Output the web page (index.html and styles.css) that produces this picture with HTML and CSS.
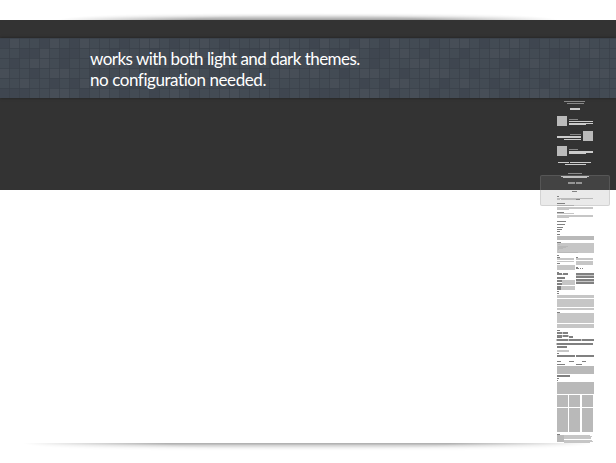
FILE: index.html
```html
<!DOCTYPE html>
<html lang="en">
<head>
<meta charset="utf-8">
<title>Themes</title>
<link rel="stylesheet" href="styles.css">
</head>
<body>
<div class="shade shade-top"></div>
<main class="stage">
  <section class="dark">
    <div class="banner">
      <svg class="tiles" width="616" height="60" aria-hidden="true">
        <defs>
          <pattern id="grid" width="10" height="10" patternUnits="userSpaceOnUse">
            <path d="M9.5 0V10M0 .5H10" stroke="#394049" stroke-opacity=".75"/>
          </pattern>
          <pattern id="tone" width="310" height="60" patternUnits="userSpaceOnUse">
            <path fill="#3f4650" d="M0 0h10v10h-10zM40 0h10v10h-10zM70 0h10v10h-10zM120 0h10v10h-10zM170 0h10v10h-10zM220 0h10v10h-10zM20 10h20v10h-20zM60 10h20v10h-20zM110 10h10v10h-10zM150 10h10v10h-10zM240 10h20v10h-20zM10 20h10v10h-10zM60 20h10v10h-10zM140 20h10v10h-10zM190 20h20v10h-20zM270 20h10v10h-10zM30 30h10v10h-10zM90 30h10v10h-10zM160 30h10v10h-10zM210 30h10v10h-10zM260 30h10v10h-10zM50 40h10v10h-10zM70 40h10v10h-10zM130 40h10v10h-10zM180 40h10v10h-10zM230 40h10v10h-10zM0 50h30v10h-30zM80 50h10v10h-10zM120 50h10v10h-10zM150 50h10v10h-10zM190 50h10v10h-10zM280 50h10v10h-10z"/>
            <path fill="#474e57" d="M10 0h10v10h-10zM50 0h10v10h-10zM80 0h10v10h-10zM140 0h20v10h-20zM200 0h10v10h-10zM260 0h20v10h-20zM40 10h10v10h-10zM90 10h10v10h-10zM180 10h20v10h-20zM280 10h10v10h-10zM30 20h20v10h-20zM100 20h20v10h-20zM220 20h10v10h-10zM0 30h10v10h-10zM50 30h20v10h-20zM120 30h20v10h-20zM190 30h10v10h-10zM280 30h20v10h-20zM20 40h10v10h-10zM80 40h20v10h-20zM150 40h10v10h-10zM250 40h10v10h-10zM50 50h20v10h-20zM100 50h10v10h-10zM170 50h10v10h-10zM220 50h20v10h-20z"/>
          </pattern>
        </defs>
        <rect width="616" height="60" fill="#434b54"/>
        <rect width="616" height="60" fill="url(#tone)"/>
        <rect width="616" height="60" fill="url(#grid)"/>
      </svg>
      <p class="tagline"><span class="line-one">works with both light and dark themes.</span><br><span class="line-two">no configuration needed.</span></p>
    </div>
  </section>
  <section class="light"></section>
</main>
<div class="shade shade-bottom"></div>

<aside class="minimap">
  <svg width="76" height="363" viewBox="540 95 76 363" shape-rendering="crispEdges" aria-hidden="true">
    <path fill="#888" d="M564 101h21v1h-21zM567 103h17v1h-17zM569 119h9v1h-9zM570 134h11v1h-11zM569 149h9v1h-9zM568 173h14v1h-14z"/>
    <path fill="#cbcbcb" d="M570 108h10v2h-10zM569 121h24v1h-24zM569 123h24v1h-24zM569 124h17v1h-17zM557 136h24v2h-24zM564 139h17v1h-17zM569 151h24v2h-24zM569 153h17v1h-17zM558 162h11v1h-11zM570 162h21v1h-21zM565 164h21v1h-21zM561 176h28v1h-28zM563 177h24v1h-24z"/>
    <path fill="#bababa" d="M557 116h10v10h-10zM583 131h10v10h-10zM557 146h10v10h-10z"/>
    <path fill="#999" d="M568 182h7v2h-7zM576 182h6v2h-6z"/>
    <path fill="#c6c6c6" d="M557 198h36v1h-36zM557 199h3v1h-3zM561 199h15v1h-15zM557 205h17v1h-17zM557 207h36v2h-36zM557 209h12v1h-12zM557 213h17v1h-17zM557 215h36v2h-36zM557 217h12v1h-12zM557 243h37v10h-37zM557 258h17v2h-17zM576 258h17v2h-17zM557 261h17v1h-17zM576 261h17v4h-17zM557 265h18v5h-18zM562 274h1v1h-1zM562 280h13v5h-13zM561 286h14v4h-14zM576 275h18v1h-18zM576 281h18v1h-18zM557 295h37v3h-37zM557 299h37v8h-37zM557 308h37v2h-37zM557 313h37v10h-37zM557 324h37v4h-37zM562 332h1v2h-1zM562 335h1v2h-1zM568 335h1v2h-1zM556 339h1v2h-1zM568 339h1v2h-1zM581 339h1v2h-1zM556 343h1v2h-1zM557 350h12v2h-12z"/>
    <path fill="#b9b9b9" d="M557 236h37v4h-37zM558 244h2v1h-2zM558 246h10v1h-10zM558 247h8v1h-8zM558 248h5v1h-5zM558 249h1v1h-1zM558 252h20v1h-20zM557 366h37v8h-37zM557 382h37v12h-37zM557 395h11v12h-11zM569 395h11v12h-11zM582 395h11v12h-11zM557 408h11v24h-11zM569 408h11v24h-11zM582 408h11v24h-11zM557 435h7v7h-7z"/>
    <path fill="#808080" d="M572 191h5v1h-5zM557 196h2v1h-2zM576 199h4v1h-4zM557 203h8v1h-8zM557 212h7v1h-7zM557 221h9v1h-9zM557 224h8v1h-8zM557 227h6v1h-6zM557 229h5v1h-5zM557 231h3v1h-3zM557 234h3v1h-3zM557 242h4v1h-4zM557 255h2v1h-2zM557 257h3v1h-3zM576 257h2v1h-2zM557 263h3v1h-3zM576 267h2v1h-2zM576 268h3v1h-3zM580 268h1v1h-1zM582 268h1v1h-1zM557 272h2v1h-2zM557 273h5v2h-5zM563 273h5v2h-5zM557 277h8v2h-8zM557 280h5v2h-5zM557 283h5v2h-5zM557 286h4v4h-4zM576 273h18v2h-18zM576 276h18v2h-18zM576 279h18v2h-18zM576 282h18v2h-18zM557 291h2v1h-2zM557 293h2v1h-2zM557 312h3v1h-3zM557 330h3v1h-3zM557 332h5v2h-5zM563 332h5v2h-5zM557 335h5v3h-5zM563 335h5v2h-5zM569 336h4v2h-4zM557 339h11v2h-11zM569 339h12v2h-12zM582 339h12v2h-12zM557 343h36v2h-36zM557 346h10v2h-10zM557 353h2v1h-2zM557 355h18v2h-18zM576 355h18v2h-18zM557 361h4v1h-4zM569 361h5v1h-5zM582 361h4v1h-4zM557 364h8v1h-8zM576 364h6v1h-6zM557 375h13v2h-13zM557 378h2v1h-2zM557 380h1v1h-1zM557 434h3v1h-3z"/>
    <path fill="#c6c6c6" d="M564 435h26v1h-26zM564 436h28v1h-28zM564 437h27v2h-27zM564 440h28v1h-28zM564 441h29v1h-29zM564 442h26v1h-26z"/>
  </svg>
  <div class="viewport"></div>
</aside>
</body>
</html>
```
FILE: styles.css
```css
body {
  margin: 0;
  height: 463px;
  overflow: hidden;
  background: #fff;
  position: relative;
}

.shade {
  height: 20px;
}

.shade-top {
  background: linear-gradient(to top, rgba(0, 0, 0, .38), rgba(0, 0, 0, .12) 4px, transparent 7px);
  mask-image: radial-gradient(ellipse 250px 9px at 308px 100%, #000 45%, transparent);
}

.shade-bottom {
  background: linear-gradient(to bottom, rgba(0, 0, 0, .3) 1px, rgba(0, 0, 0, .19) 2px, rgba(0, 0, 0, .05) 5px, transparent 8px);
  mask-image: radial-gradient(ellipse 285px 11px at 308px 0, #000 50%, transparent);
}

.dark {
  box-sizing: border-box;
  height: 170px;
  padding-top: 18px;
  background: #333;
}

.light {
  height: 253px;
  background: #fff;
}

.banner {
  display: grid;
  height: 60px;
  overflow: hidden;
  box-shadow: 0 0 3px rgba(0, 0, 0, .4);
}

.banner > * {
  grid-area: 1 / 1;
}

.tiles {
  display: block;
}

.tagline {
  z-index: 1;
  margin: 10px 0 0 90px;
  color: #fff;
  font: 400 17px/21px Lato, sans-serif;
  white-space: nowrap;
}

.line-one {
  letter-spacing: -.53px;
}

.line-two {
  letter-spacing: -.43px;
}

.minimap {
  position: absolute;
  top: 95px;
  right: 0;
  width: 76px;
  height: 363px;
}

.minimap svg {
  display: block;
}

.viewport {
  position: absolute;
  top: 80px;
  left: 0;
  box-sizing: border-box;
  width: 70px;
  height: 31px;
  border: 1px solid rgba(142, 142, 142, .25);
  border-radius: 2px;
  background: rgba(142, 142, 142, .186);
}
```
